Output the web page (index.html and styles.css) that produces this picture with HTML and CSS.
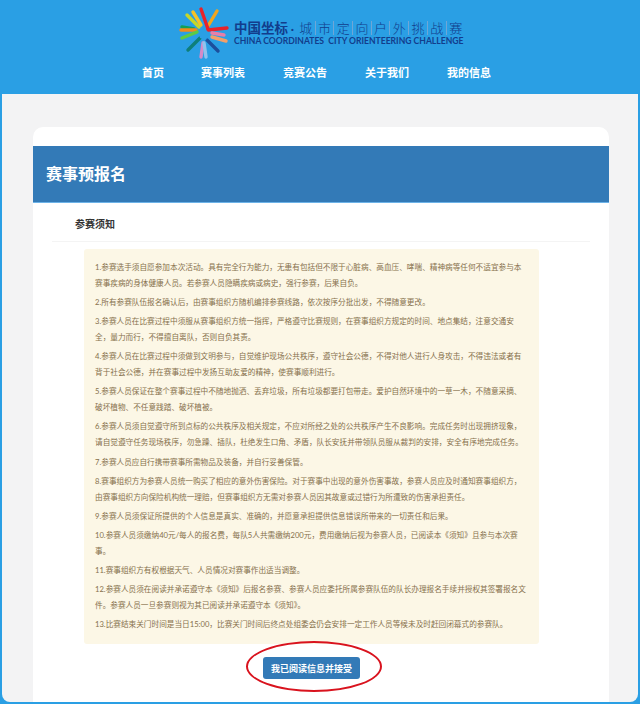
FILE: index.html
```html
<!DOCTYPE html>
<html lang="zh-CN">
<head>
    <meta charset="UTF-8">
    <title>赛事预报名</title>
    <link rel="stylesheet" href="styles.css">
</head>
<body>
    <div class="page">
        <div class="top">
            <div class="logo">
                <svg class="logo-star" width="50" height="58" viewBox="179 6 50 58" fill="none" stroke-width="3.4" stroke-linecap="round">
                    <path d="M182 27 L194 29" stroke="#12a05a"/>
                    <path d="M181 30 L196 30" stroke="#f08a1e"/>
                    <path d="M187 15 L199 27" stroke="#c5d62b"/>
                    <path d="M193 12 L201 25" stroke="#f5c327"/>
                    <path d="M217 11 L208 26" stroke="#f2a51d"/>
                    <path d="M201 9 L208 29" stroke="#e8232a"/>
                    <path d="M227 28 L208 30" stroke="#e8232a"/>
                    <path d="M182 38 L197 32" stroke="#5ccb45"/>
                    <path d="M188 50 L200 38" stroke="#0e7f7a"/>
                    <path d="M201 57 L203 43" stroke="#d58ac8"/>
                    <path d="M206 57 L204 43" stroke="#8fc3ee"/>
                    <path d="M218 51 L207 40" stroke="#1c4f9c"/>
                    <path d="M226 41 L212 37" stroke="#f2a06a"/>
                    <path d="M224 35 L212 33" stroke="#e87fa8"/>
                    <path d="M204 28 L209 33 L206 40 L200 38 L199 32 Z" stroke="none" fill="#2a9fe4"/>
                </svg>
                <div class="logo-text">
                    <div class="logo-cn">
                        <b>中国坐标</b><i>·</i><span>城</span><span>市</span><span>定</span><span>向</span><span>户</span><span>外</span><span>挑</span><span>战</span><span>赛</span>
                    </div>
                    <div class="logo-en">CHINA COORDINATES&nbsp; CITY ORIENTEERING CHALLENGE</div>
                </div>
            </div>
            <ul class="nav">
                <li class="nav-first">首页</li>
                <li>赛事列表</li>
                <li>竞赛公告</li>
                <li>关于我们</li>
                <li>我的信息</li>
            </ul>
        </div>

        <div class="content">
            <div class="card">
                <div class="card-head">赛事预报名</div>
                <div class="card-body">
                    <div class="notice-title">参赛须知</div>
                    <div class="alert">
                        <p>1.参赛选手须自愿参加本次活动。具有完全行为能力，无患有包括但不限于心脏病、高血压、哮喘、精神病等任何不适宜参与本<br>赛事疾病的身体健康人员。若参赛人员隐瞒疾病或病史，强行参赛，后果自负。</p>
                        <p>2.所有参赛队伍报名确认后，由赛事组织方随机编排参赛线路，依次按序分批出发，不得随意更改。</p>
                        <p>3.参赛人员在比赛过程中须服从赛事组织方统一指挥，严格遵守比赛规则，在赛事组织方规定的时间、地点集结，注意交通安<br>全，量力而行，不得擅自离队，否则自负其责。</p>
                        <p>4.参赛人员在比赛过程中须做到文明参与，自觉维护现场公共秩序，遵守社会公德，不得对他人进行人身攻击，不得违法或者有<br>背于社会公德，并在赛事过程中发扬互助友爱的精神，使赛事顺利进行。</p>
                        <p>5.参赛人员保证在整个赛事过程中不随地抛洒、丢弃垃圾，所有垃圾都要打包带走。爱护自然环境中的一草一木，不随意采摘、<br>破坏植物、不任意践踏、破坏植被。</p>
                        <p>6.参赛人员须自觉遵守所到点标的公共秩序及相关规定，不应对所经之处的公共秩序产生不良影响。完成任务时出现拥挤现象，<br>请自觉遵守任务现场秩序，勿急躁、插队，杜绝发生口角、矛盾，队长安抚并带领队员服从裁判的安排，安全有序地完成任务。</p>
                        <p>7.参赛人员应自行携带赛事所需物品及装备，并自行妥善保管。</p>
                        <p>8.赛事组织方为参赛人员统一购买了相应的意外伤害保险。对于赛事中出现的意外伤害事故，参赛人员应及时通知赛事组织方，<br>由赛事组织方向保险机构统一理赔，但赛事组织方无需对参赛人员因其故意或过错行为所遭致的伤害承担责任。</p>
                        <p>9.参赛人员须保证所提供的个人信息是真实、准确的，并愿意承担提供信息错误所带来的一切责任和后果。</p>
                        <p>10.参赛人员须缴纳40元/每人的报名费，每队5人共需缴纳200元，费用缴纳后视为参赛人员，已阅读本《须知》且参与本次赛<br>事。</p>
                        <p>11.赛事组织方有权根据天气、人员情况对赛事作出适当调整。</p>
                        <p>12.参赛人员须在阅读并承诺遵守本《须知》后报名参赛、参赛人员应委托所属参赛队伍的队长办理报名手续并授权其签署报名文<br>件。参赛人员一旦参赛则视为其已阅读并承诺遵守本《须知》。</p>
                        <p>13.比赛结束关门时间是当日15:00，比赛关门时间后终点处组委会仍会安排一定工作人员等候未及时赶回闭幕式的参赛队。</p>
                    </div>
                    <div class="accept">
                        <button class="accept-btn">我已阅读信息并接受</button>
                        <div class="ring"></div>
                    </div>
                </div>
            </div>
        </div>
    </div>
</body>
</html>
```

FILE: styles.css
```css
* {
    box-sizing: border-box;
}

html, body {
    margin: 0;
    padding: 0;
}

body {
    font-family: Lato, "Noto Sans CJK SC", sans-serif;
}

.page {
    display: flex;
    flex-direction: column;
    height: 704px;
    overflow: hidden;
    background-color: #2a9fe4;
}

.top {
    height: 94px;
    flex: none;
}

.logo {
    display: flex;
    align-items: flex-start;
    height: 64px;
    padding: 6px 0 0 179px;
}

.logo-star {
    flex: none;
}

.logo-text {
    margin-left: 5px;
    padding-top: 14px;
    color: #123d8c;
}

.logo-cn {
    display: flex;
    align-items: center;
    height: 16px;
}

.logo-cn b {
    width: 54px;
    font-size: 13.5px;
    line-height: 16px;
    white-space: nowrap;
}

.logo-cn i {
    width: 9px;
    font-style: normal;
    font-weight: bold;
    font-size: 12px;
    text-align: center;
}

.logo-cn span {
    width: 18.7px;
    border-right: 1px solid #6fa6d6;
    font-size: 13px;
    line-height: 14px;
    text-align: center;
    font-weight: 300;
}

.logo-cn span:last-child {
    border-right: none;
}

.logo-en {
    font-size: 8.6px;
    line-height: 10px;
    font-weight: bold;
    white-space: nowrap;
}

.nav {
    display: flex;
    margin: 0;
    padding: 0 0 0 142px;
    list-style: none;
    color: #fff;
    font-size: 11px;
    font-weight: bold;
    line-height: 18px;
}

.nav li {
    width: 82px;
}

.nav .nav-first {
    width: 59px;
}

.content {
    flex: 1;
    margin: 0 2px 2px;
    padding: 33px 29px 0 31px;
    background-color: #f3f3f4;
    border-radius: 0 0 8px 8px;
    overflow: hidden;
}

.card {
    height: 100%;
    padding-top: 19px;
    background-color: #fff;
    border-radius: 10px 10px 0 0;
}

.card-head {
    height: 57px;
    padding-left: 13px;
    background-color: #337ab7;
    border-bottom: 1px solid #6db3e8;
    color: #fff;
    font-size: 16px;
    font-weight: bold;
    line-height: 56px;
}

.card-body {
    padding: 0 19px 0;
}

.notice-title {
    height: 39px;
    padding-left: 23px;
    border-bottom: 1px solid #f4f4f4;
    color: #333;
    font-size: 10px;
    font-weight: bold;
    line-height: 42px;
}

.alert {
    width: 455px;
    height: 395px;
    margin: 7px 0 0 32px;
    padding: 10px 11px 0;
    background-color: #fcf7e6;
    border-radius: 3px;
    color: #86704c;
    font-size: 7.65px;
    line-height: 16px;
    white-space: nowrap;
}

.alert p {
    margin: 0 0 3.1px;
}

.accept {
    position: relative;
    display: flex;
    margin-top: 13px;
    padding-left: 211px;
}

.accept-btn {
    width: 97px;
    height: 22px;
    padding: 0;
    background-color: #337ab7;
    border: none;
    border-radius: 3px;
    color: #fff;
    font-family: inherit;
    font-size: 9px;
    font-weight: bold;
    cursor: pointer;
}

.ring {
    position: absolute;
    left: 194px;
    top: -16px;
    width: 136px;
    height: 51px;
    border: 2px solid #d9131e;
    border-radius: 50%;
}
```
